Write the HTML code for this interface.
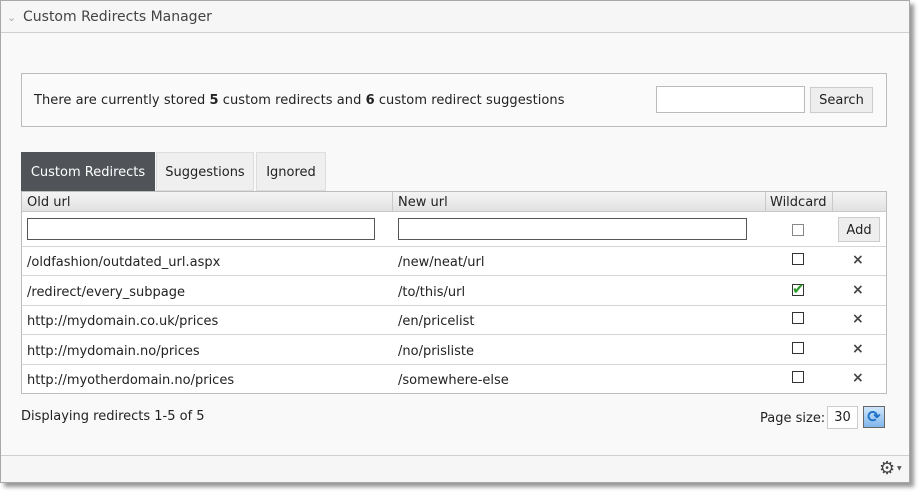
<!DOCTYPE html>
<html><head><style>
*{box-sizing:border-box;margin:0;padding:0}
body{width:923px;height:500px;background:#fff;font-family:"DejaVu Sans","Liberation Sans",sans-serif;font-size:12.5px;color:#222;position:relative;overflow:hidden}
.a{position:absolute}
#panel{left:0;top:0;width:910px;height:483px;background:#f9f9f9;border:1px solid #a8a8a8;box-shadow:4px 4px 4px #999}
.cell{position:absolute;white-space:nowrap;font-size:13px}
.hl{position:absolute;height:1px;background:#d6d6d6}
.vl{position:absolute;width:1px;background:#c9c9c9}
.cb{position:absolute;width:12px;height:12px;border:1px solid #333;background:#fff}
.x{position:absolute;font-size:14px;color:#444;font-weight:bold}
</style></head><body>
<div id="panel" class="a"></div>
<div class="a" style="left:1px;top:1px;width:908px;height:32px;background:#f6f6f6;border-bottom:1px solid #cfcfcf"></div>
<div class="a" style="left:7px;top:11px;color:#aaa;font-size:11px">&#8964;</div>
<div class="a" style="left:23px;top:9px;font-size:14px;color:#444">Custom Redirects Manager</div>

<div class="a" style="left:21px;top:73px;width:866px;height:54px;border:1px solid #bdbdbd;background:#fafafa"></div>
<div class="a" style="left:34px;top:93px;font-size:13px;letter-spacing:0.05px">There are currently stored <b>5</b> custom redirects and <b>6</b> custom redirect suggestions</div>
<div class="a" style="left:656px;top:86px;width:149px;height:27px;border:1px solid #bbb;background:#fff"></div>
<div class="a" style="left:810px;top:87px;width:63px;height:26px;border:1px solid #ccc;background:#eee;text-align:center;line-height:26px;font-size:13px">Search</div>

<div class="a" style="left:21px;top:152px;width:134px;height:39px;background:#505459;color:#fff;text-align:center;line-height:42px;font-size:13px">Custom Redirects</div>
<div class="a" style="left:156px;top:152px;width:98px;height:39px;background:#efefef;border:1px solid #ddd;text-align:center;line-height:40px;font-size:13px">Suggestions</div>
<div class="a" style="left:256px;top:152px;width:70px;height:39px;background:#efefef;border:1px solid #ddd;text-align:center;line-height:40px;font-size:13px">Ignored</div>

<div class="a" style="left:21px;top:191px;width:866px;height:203px;border:1px solid #bdbdbd;background:#fff"></div>
<div class="a" style="left:22px;top:192px;width:864px;height:20px;background:linear-gradient(#f4f4f4,#e2e2e2);border-bottom:1px solid #c9c9c9"></div>
<div class="vl" style="left:392px;top:192px;height:20px"></div>
<div class="vl" style="left:765px;top:192px;height:20px"></div>
<div class="vl" style="left:832px;top:192px;height:20px"></div>
<div class="cell" style="left:27px;top:195px">Old url</div>
<div class="cell" style="left:398px;top:195px">New url</div>
<div class="cell" style="left:770px;top:195px">Wildcard</div>

<div class="a" style="left:27px;top:218px;width:348px;height:22px;border:1px solid #555;background:#fff"></div>
<div class="a" style="left:398px;top:218px;width:349px;height:22px;border:1px solid #555;background:#fff"></div>
<div class="cb" style="left:792px;top:224px;border-color:#888"></div>
<div class="a" style="left:838px;top:217px;width:42px;height:25px;border:1px solid #ccc;background:#eee;text-align:center;line-height:25px;font-size:13px">Add</div>

<div class="hl" style="left:22px;top:246px;width:864px"></div>
<div class="hl" style="left:22px;top:275px;width:864px"></div>
<div class="hl" style="left:22px;top:305px;width:864px"></div>
<div class="hl" style="left:22px;top:334px;width:864px"></div>
<div class="hl" style="left:22px;top:364px;width:864px"></div>

<div class="cell" style="left:27px;top:255px">/oldfashion/outdated_url.aspx</div>
<div class="cell" style="left:398px;top:255px">/new/neat/url</div>
<div class="cb" style="left:792px;top:253px"></div><div class="x" style="left:852px;top:252px">×</div>

<div class="cell" style="left:27px;top:285px">/redirect/every_subpage</div>
<div class="cell" style="left:398px;top:285px">/to/this/url</div>
<div class="cb" style="left:792px;top:284px"></div><div class="a" style="left:792px;top:280px;color:#2a9a2a;font-size:15px;font-weight:bold">✔</div><div class="x" style="left:852px;top:282px">×</div>

<div class="cell" style="left:27px;top:314px">http://mydomain.co.uk/prices</div>
<div class="cell" style="left:398px;top:314px">/en/pricelist</div>
<div class="cb" style="left:792px;top:312px"></div><div class="x" style="left:852px;top:311px">×</div>

<div class="cell" style="left:27px;top:344px">http://mydomain.no/prices</div>
<div class="cell" style="left:398px;top:344px">/no/prisliste</div>
<div class="cb" style="left:792px;top:342px"></div><div class="x" style="left:852px;top:341px">×</div>

<div class="cell" style="left:27px;top:373px">http://myotherdomain.no/prices</div>
<div class="cell" style="left:398px;top:373px">/somewhere-else</div>
<div class="cb" style="left:792px;top:371px"></div><div class="x" style="left:852px;top:370px">×</div>

<div class="a" style="left:21px;top:409px;font-size:13px">Displaying redirects 1-5 of 5</div>
<div class="a" style="left:760px;top:411px;font-size:13px">Page size:</div>
<div class="a" style="left:827px;top:406px;width:31px;height:23px;border:1px solid #ccc;background:#fff;font-size:13px;text-align:center;line-height:21px">30</div>
<div class="a" style="left:863px;top:406px;width:22px;height:22px;border:1px solid #666;background:linear-gradient(#cfe6fb,#7fb6ea);color:#1d6fc8;font-size:16px;text-align:center;line-height:20px;font-weight:bold">⟳</div>

<div class="a" style="left:1px;top:455px;width:908px;height:27px;background:#f6f6f6;border-top:1px solid #cfcfcf"></div>
<div class="a" style="left:879px;top:458px;font-size:18px;color:#444;font-weight:bold">⚙</div>
<div class="a" style="left:897px;top:465px;font-size:6px;color:#555">▼</div>
</body></html>
